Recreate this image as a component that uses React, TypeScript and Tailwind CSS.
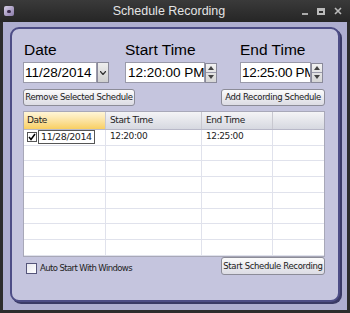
const rows = [
  { date: "11/28/2014", start: "12:20:00", end: "12:25:00" },
];

const SpinButtons = () => (
  <div className="flex flex-col w-[12px] h-[20px] border border-[#8a8a9a] bg-gradient-to-b from-[#f2f2f2] to-[#d6d6d6]">
    <div className="flex-1 flex items-center justify-center border-b border-[#9a9aaa]">
      <svg width="6" height="4" viewBox="0 0 6 4">
        <path d="M0 4 L3 0 L6 4 Z" fill="#444" />
      </svg>
    </div>
    <div className="flex-1 flex items-center justify-center">
      <svg width="6" height="4" viewBox="0 0 6 4">
        <path d="M0 0 L3 4 L6 0 Z" fill="#444" />
      </svg>
    </div>
  </div>
);

const SmallButton = ({ label, className }: { label: string; className?: string }) => (
  <button
    className={
      "h-[17px] px-[4px] rounded-[3px] border border-[#8c8c98] bg-gradient-to-b from-[#fbfbfb] to-[#dcdce4] text-[8.5px] leading-none text-[#1a1a1a] whitespace-nowrap font-['DejaVu_Sans',sans-serif] tracking-[-0.35px] flex items-center justify-center " +
      (className ?? "")
    }
  >
    {label}
  </button>
);

export default function App() {
  const blankRows = Array.from({ length: 7 });
  return (
    <div className="w-[350px] h-[313px] bg-[#2c2c2c] flex flex-col overflow-hidden font-['Liberation_Sans',Arial,sans-serif]">
      {/* title bar */}
      <div className="h-[22px] flex items-center px-[4px] bg-gradient-to-b from-[#3a3a3a] to-[#262626]">
        <div className="w-[10px] h-[10px] rounded-[2px] bg-gradient-to-br from-[#d8d0e8] to-[#8a7aa8] flex items-center justify-center">
          <div className="w-[4px] h-[3px] rounded-full bg-[#3a2a4a]" />
        </div>
        <div className="flex-1 text-center text-[12.5px] text-[#e4e4e4] pl-[22px]">Schedule Recording</div>
        <div className="flex items-center gap-[9px] pr-[4px] text-[#bbb]">
          <div className="w-[6px] h-[2px] bg-[#aaa] mt-[5px]" />
          <div className="w-[8px] h-[7px] border-[2px] border-[#bbb] border-t-[3px]" />
          <svg width="8" height="8" viewBox="0 0 8 8">
            <path d="M1 1 L7 7 M7 1 L1 7" stroke="#bbb" strokeWidth="1.6" />
          </svg>
        </div>
      </div>

      {/* frame */}
      <div className="flex-1 mx-[3px] mb-[3px] bg-[#aeaed0] pt-[5px] pl-[7px] pr-[7px] pb-[8px] flex">
        <div className="flex-1 rounded-[9px] border-[2px] border-[#4d4d86] shadow-[2px_2px_0_#3a3a66] bg-[#c5c5de] pl-[11px] pr-[13px] pt-[12px] flex flex-col">
          {/* labels + inputs */}
          <div className="flex">
            <div className="w-[102px] flex flex-col">
              <div className="text-[15.5px] leading-[18px] text-black pl-[1px]">Date</div>
              <div className="flex mt-[3px]">
                <div className="w-[74px] h-[21px] bg-white border border-[#9a9aaa] text-[13.5px] leading-[19px] pl-[1px] text-black">
                  11/28/2014
                </div>
                <div className="w-[12px] h-[21px] border border-[#8a8a9a] bg-gradient-to-b from-[#eeeeee] to-[#cfcfcf] flex items-center justify-center">
                  <svg width="6" height="4" viewBox="0 0 6 4">
                    <path d="M0 0 L3 3.5 L6 0" stroke="#333" strokeWidth="1.3" fill="none" />
                  </svg>
                </div>
              </div>
            </div>
            <div className="w-[115px] flex flex-col">
              <div className="text-[15.5px] leading-[18px] text-black">Start Time</div>
              <div className="flex mt-[3px] items-center">
                <div className="w-[80px] h-[21px] bg-white border border-[#9a9aaa] text-[13.5px] leading-[19px] pl-[2px] text-black overflow-hidden whitespace-nowrap">
                  12:20:00 PM
                </div>
                <SpinButtons />
              </div>
            </div>
            <div className="flex flex-col">
              <div className="text-[15.5px] leading-[18px] text-black">End Time</div>
              <div className="flex mt-[3px] items-center">
                <div className="w-[71px] h-[21px] bg-white border border-[#9a9aaa] text-[13.5px] leading-[19px] pl-[1px] tracking-[-0.3px] text-black overflow-hidden whitespace-nowrap">
                  12:25:00 PM
                </div>
                <SpinButtons />
              </div>
            </div>
          </div>

          {/* action buttons */}
          <div className="flex justify-between mt-[6px]">
            <SmallButton label="Remove Selected Schedule" className="w-[112px]" />
            <SmallButton label="Add Recording Schedule" className="w-[104px]" />
          </div>

          {/* table */}
          <div className="mt-[5px] h-[146px] border border-[#a8a8b8] bg-white flex flex-col text-[9px] text-[#222] font-['DejaVu_Sans',sans-serif] tracking-[-0.4px]">
            <div className="h-[18px] flex bg-gradient-to-b from-[#f4f4f6] to-[#d6d8e0] border-b border-[#b8b8c8]">
              <div className="w-[82px] flex items-center pl-[3px] bg-gradient-to-b from-[#fff6d8] to-[#f8cf60] border-r border-[#c8c8d0]">Date</div>
              <div className="w-[96px] flex items-center pl-[4px] border-r border-[#c8c8d0]">Start Time</div>
              <div className="w-[71px] flex items-center pl-[4px] border-r border-[#c8c8d0]">End Time</div>
              <div className="flex-1" />
            </div>
            {rows.map((r, i) => (
              <div key={i} className="h-[16px] flex border-b border-[#e0e2ec]">
                <div className="w-[82px] flex items-center pl-[3px] border-r border-[#e0e2ec]">
                  <div className="w-[10px] h-[10px] border border-[#555] flex items-center justify-center bg-white">
                    <svg width="8" height="8" viewBox="0 0 8 8">
                      <path d="M1 4 L3 6.5 L7 1" stroke="#000" strokeWidth="1.5" fill="none" />
                    </svg>
                  </div>
                  <div className="ml-[1px] h-[14px] w-[57px] border border-[#555] flex items-center pl-[2px] text-[9.5px]">{r.date}</div>
                </div>
                <div className="w-[96px] flex items-center pl-[4px] border-r border-[#e0e2ec]">{r.start}</div>
                <div className="w-[71px] flex items-center pl-[4px] border-r border-[#e0e2ec]">{r.end}</div>
                <div className="flex-1" />
              </div>
            ))}
            {blankRows.map((_, i) => (
              <div key={i} className="h-[16px] flex border-b border-[#e0e2ec]">
                <div className="w-[82px] border-r border-[#e0e2ec]" />
                <div className="w-[96px] border-r border-[#e0e2ec]" />
                <div className="w-[71px] border-r border-[#e0e2ec]" />
                <div className="flex-1" />
              </div>
            ))}
          </div>

          {/* bottom row */}
          <div className="flex justify-between items-start">
            <label className="flex items-center mt-[5px] ml-[3px]">
              <div className="w-[11px] h-[11px] border border-[#55557a] bg-gradient-to-br from-[#e8e8f0] to-[#fff]" />
              <span className="ml-[3px] text-[8.5px] text-[#222] font-['DejaVu_Sans',sans-serif] tracking-[-0.6px]">Auto Start With Windows</span>
            </label>
            <SmallButton label="Start Schedule Recording" className="w-[104px] h-[18px]" />
          </div>
        </div>
      </div>
    </div>
  );
}
